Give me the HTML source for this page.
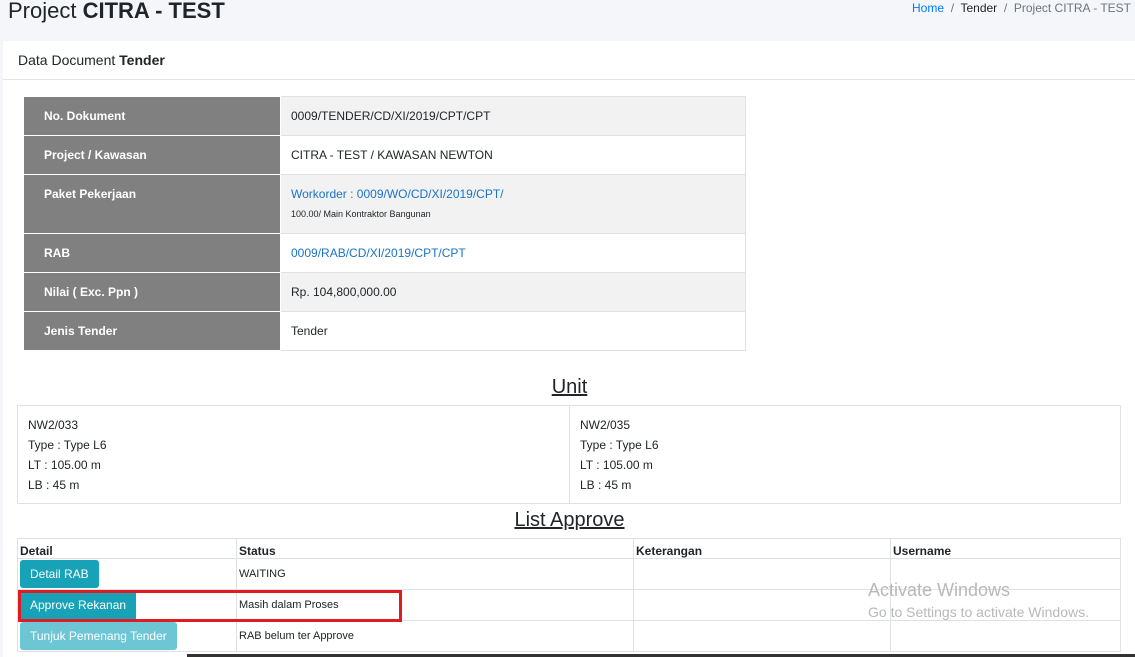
<!DOCTYPE html>
<html><head><meta charset="utf-8"><style>
*{box-sizing:border-box;margin:0;padding:0}
body{width:1135px;height:657px;overflow:hidden;background:#f4f6f9;font-family:"Liberation Sans",sans-serif;color:#212529;position:relative}
.abs{position:absolute}
h1{position:absolute;left:8px;top:-2px;font-size:22px;font-weight:normal;color:#212529}
.bc{position:absolute;right:4px;top:1px;font-size:12px;color:#6c757d}
.bc a{color:#007bff;text-decoration:none}
.card{position:absolute;left:3px;top:41px;width:1132px;height:616px;background:#fff}
.ch{position:absolute;left:0;top:0;width:100%;height:39px;border-bottom:1px solid #e3e3e3;font-size:14px;padding:11px 15px}
table{border-collapse:collapse;position:absolute}
.t1{left:20px;top:55px;width:723px;font-size:12px}
.t1 td{border:1px solid #dee2e6;vertical-align:top;padding:12px 10px}
.t1 td.l{background:#808080;color:#fff;font-weight:bold;width:257px;padding-left:20px;border-color:#fff}
.g td.v{background:#f2f2f2}
a.lk{color:#1a73c9;text-decoration:none}
.hd{position:absolute;font-size:20px;text-decoration:underline;left:0;width:1135px;text-align:center}
.unit{position:absolute;left:14px;top:364px;width:1104px;height:99px;border:1px solid #dee2e6;font-size:12px;line-height:20px}
.unit div{position:absolute;top:9px;padding-left:10px}
.t2{left:14px;top:497px;width:1104px;font-size:11px}
.t2 td{border:1px solid #dee2e6;height:31px;padding:0 2px;vertical-align:middle}
.t2 tr:first-child td{height:20px;font-weight:bold;font-size:12px;vertical-align:bottom}
.btn{display:inline-block;background:#17a2b8;color:#fff;font-size:12px;padding:7px 10px;border-radius:3px}
</style></head><body>
<h1>Project <b>CITRA - TEST</b></h1>
<div class="bc"><a>Home</a> &nbsp;/&nbsp; <span style="color:#212529">Tender</span> &nbsp;/&nbsp; Project CITRA - TEST</div>
<div class="card">
<div class="ch">Data Document <b>Tender</b></div>
<table class="t1">
<tr class="g" style="height:39px"><td class="l">No. Dokument</td><td class="v">0009/TENDER/CD/XI/2019/CPT/CPT</td></tr>
<tr style="height:39px"><td class="l">Project / Kawasan</td><td class="v">CITRA - TEST / KAWASAN NEWTON</td></tr>
<tr class="g" style="height:59px"><td class="l">Paket Pekerjaan</td><td class="v"><a class="lk">Workorder : 0009/WO/CD/XI/2019/CPT/</a><div style="font-size:9px;margin-top:8px">100.00/ Main Kontraktor Bangunan</div></td></tr>
<tr style="height:39px"><td class="l">RAB</td><td class="v"><a class="lk">0009/RAB/CD/XI/2019/CPT/CPT</a></td></tr>
<tr class="g" style="height:39px"><td class="l">Nilai ( Exc. Ppn )</td><td class="v">Rp. 104,800,000.00</td></tr>
<tr style="height:39px"><td class="l">Jenis Tender</td><td class="v">Tender</td></tr>
</table>
</div>
<div class="hd" style="top:376px;left:2px">Unit</div>
<div class="unit" style="left:17px;top:405px"><div style="left:0">NW2/033<br>Type : Type L6<br>LT : 105.00 m<br>LB : 45 m</div><div style="left:551px;top:0;height:98px;border-left:1px solid #dee2e6;padding-top:9px">NW2/035<br>Type : Type L6<br>LT : 105.00 m<br>LB : 45 m</div></div>
<div class="hd" style="top:509px;left:2px">List Approve</div>
<table class="t2" style="left:17px;top:538px">
<tr><td style="width:219px">Detail</td><td style="width:397px">Status</td><td style="width:257px">Keterangan</td><td>Username</td></tr>
<tr><td><span class="btn">Detail RAB</span></td><td>WAITING</td><td></td><td></td></tr>
<tr><td><span class="btn" style="border-radius:0">Approve Rekanan</span></td><td>Masih dalam Proses</td><td></td><td></td></tr>
<tr><td><span class="btn" style="background:#6cc6d3">Tunjuk Pemenang Tender</span></td><td>RAB belum ter Approve</td><td></td><td></td></tr>
</table>
<div class="abs" style="left:18px;top:590px;width:384px;height:32px;border:3px solid #e11b22"></div>
<div class="abs" style="left:868px;top:580px;font-size:18px;color:#b8b8b8">Activate Windows</div>
<div class="abs" style="left:868px;top:604px;font-size:14px;color:#b8b8b8">Go to Settings to activate Windows.</div>
<div class="abs" style="left:187px;top:654px;width:948px;height:3px;background:#333"></div>
</body></html>
